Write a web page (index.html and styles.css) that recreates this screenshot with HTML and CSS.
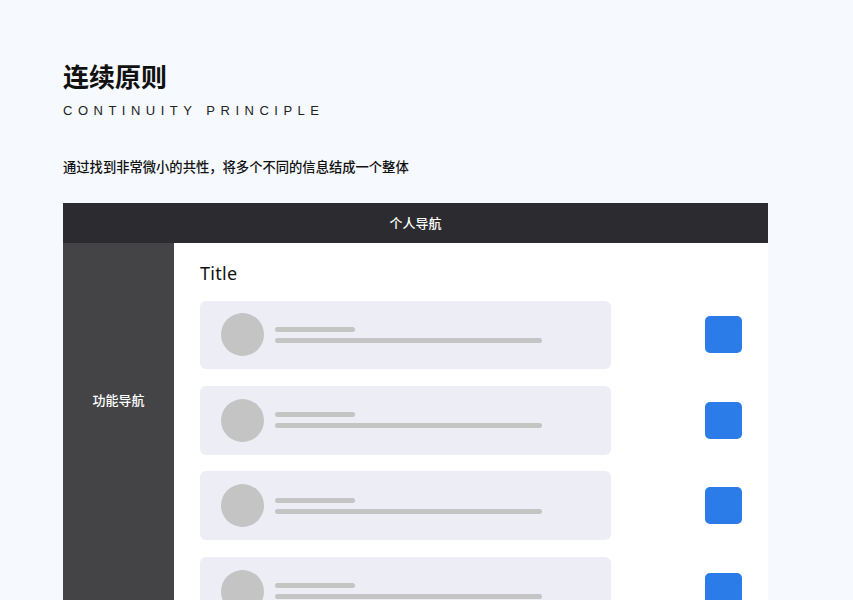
FILE: index.html
```html
<!DOCTYPE html>
<html lang="zh-CN">
<head>
<meta charset="utf-8">
<title>连续原则</title>
<link rel="stylesheet" href="styles.css">
</head>
<body>
<div class="page">
	<h1 class="title">连续原则</h1>
	<p class="subtitle">CONTINUITY PRINCIPLE</p>
	<p class="desc">通过找到非常微小的共性，将多个不同的信息结成一个整体</p>

	<div class="demo">
		<div class="topbar">个人导航</div>
		<div class="body">
			<div class="sidebar"><span>功能导航</span></div>
			<div class="main">
				<h2 class="main-title">Title</h2>
				<ul class="list">
					<li class="row">
						<div class="card"><i class="avatar"></i><div class="lines"><b class="l1"></b><b class="l2"></b></div></div>
						<span class="btn"></span>
					</li>
					<li class="row">
						<div class="card"><i class="avatar"></i><div class="lines"><b class="l1"></b><b class="l2"></b></div></div>
						<span class="btn"></span>
					</li>
					<li class="row">
						<div class="card"><i class="avatar"></i><div class="lines"><b class="l1"></b><b class="l2"></b></div></div>
						<span class="btn"></span>
					</li>
					<li class="row">
						<div class="card"><i class="avatar"></i><div class="lines"><b class="l1"></b><b class="l2"></b></div></div>
						<span class="btn"></span>
					</li>
				</ul>
			</div>
		</div>
	</div>
</div>
</body>
</html>
```

FILE: styles.css
```css
*{ margin:0; padding:0; box-sizing:border-box;}
html, body{ background:#f6f9fe;}
body{ font-family:"Noto Sans","Noto Sans CJK SC",sans-serif; color:#111; overflow:hidden;}
li{ list-style:none;}

.page{ padding:59px 0 0 63px; width:768px;}
.title{ font-size:26px; line-height:36px; font-weight:700; color:#111;}
.subtitle{ margin-top:8px; font-family:"Liberation Sans",Arial,sans-serif; font-size:13px; line-height:16px; letter-spacing:5.5px; color:#222;}
.desc{ margin-top:38px; font-size:13.3px; line-height:20px; font-weight:500; color:#111;}

.demo{ margin-top:26px; width:705px;}
.topbar{ height:40px; background:#2c2b30; color:#fff; font-size:13px; line-height:40px; text-align:center; font-weight:500;}
.body{ display:flex; height:420px;}
.sidebar{ width:111px; background:#444446; color:#fff; font-size:13px; text-align:center; padding-top:147px; font-weight:500;}
.main{ flex:1; background:#fff; padding:16.5px 26px 0 26px;}
.main-title{ font-size:18px; line-height:26px; font-weight:400; color:#111; letter-spacing:0.3px;}

.list{ margin-top:15px; display:flex; flex-direction:column; gap:16.6px;}
.row{ display:flex; align-items:center; justify-content:space-between;}
.card{ width:411px; height:68.9px; background:#ededf5; border-radius:6px; display:flex; align-items:center; padding-left:21px;}
.avatar{ width:43px; height:43px; border-radius:50%; background:#c4c4c4;}
.lines{ margin-left:11px; display:flex; flex-direction:column; gap:6px;}
.lines b{ display:block; height:5px; border-radius:3px; background:#c4c4c4;}
.l1{ width:80px;}
.l2{ width:267px;}
.btn{ width:37px; height:37px; border-radius:5px; background:#2b7be8;}
```
